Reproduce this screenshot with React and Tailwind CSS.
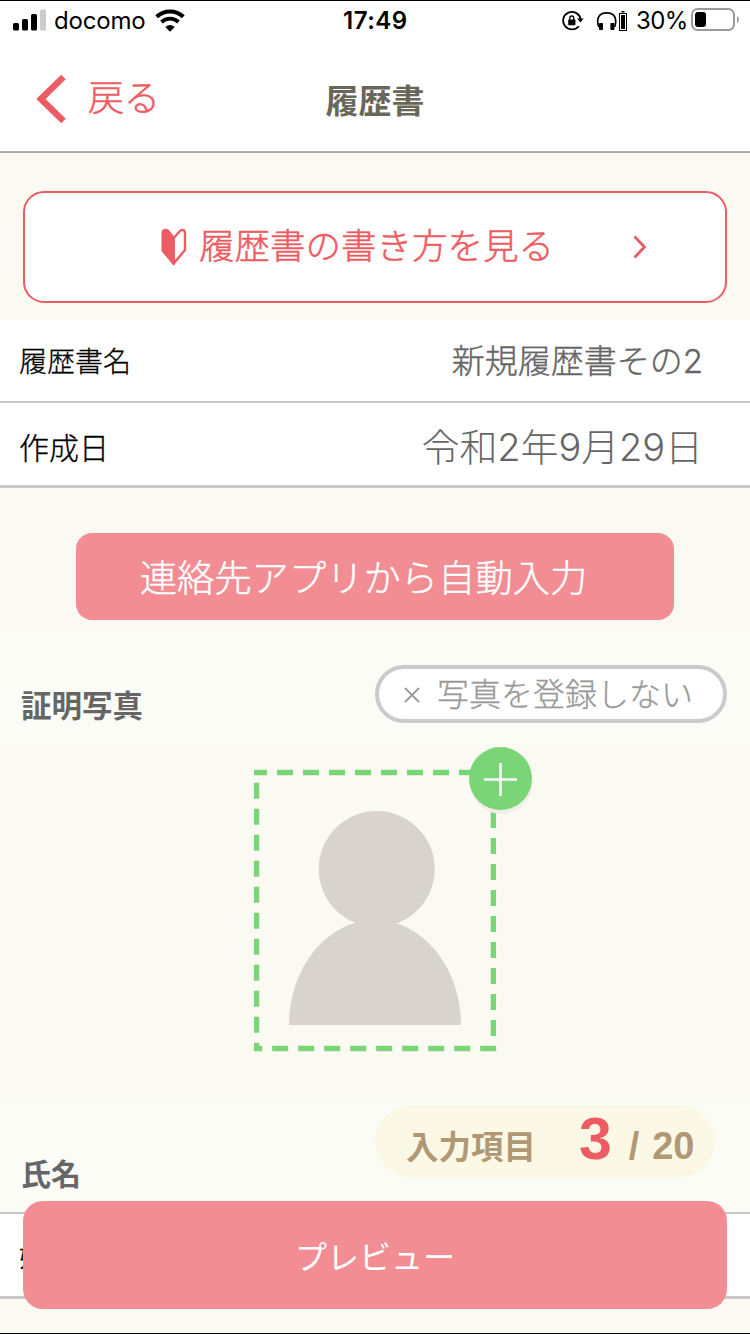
import React from "react";

const SignalIcon = () => (
	<svg className="ml-[13px] mt-2 w-[33px] h-[22px] shrink-0" viewBox="0 0 33 22">
		<rect x="0" y="14" width="6" height="7.5" rx="1.5" />
		<rect x="9" y="10" width="6" height="11.5" rx="1.5" />
		<rect x="18" y="5" width="6" height="16.5" rx="1.5" />
		<rect x="27" y="0.5" width="6" height="21" rx="1.5" fill="#cccccc" />
	</svg>
);

const WifiIcon = () => (
	<svg className="ml-[9px] mt-2 w-[30px] h-[23px] shrink-0" viewBox="0 0 30 23" fill="none" stroke="#000">
		<path d="M1.7 7.8A19.3 19.3 0 0 1 28.3 7.8" strokeWidth="4" />
		<path d="M6.5 13A12.4 12.4 0 0 1 23.5 13" strokeWidth="3.8" />
		<path d="M10.3 18Q15 14.2 19.7 18L15 22.8Z" fill="#000" stroke="none" />
	</svg>
);

const RotationLockIcon = () => (
	<svg className="mt-[9px] w-[22px] h-[22px] shrink-0" viewBox="0 0 22 22" fill="none" stroke="#000">
		<path d="M18.6 9A8.8 8.8 0 1 0 16.8 16.2" strokeWidth="1.8" />
		<path d="M15.2 8.6H21.6L18.4 12.6Z" fill="#000" stroke="none" />
		<rect x="6.2" y="9.4" width="7.2" height="5.8" rx="0.8" fill="#000" stroke="none" />
		<path d="M7.8 10V8a2 2 0 0 1 4 0V10" strokeWidth="1.3" />
	</svg>
);

const HeadphoneIcon = () => (
	<svg className="ml-3 mt-[9px] w-[32px] h-[22px] shrink-0" viewBox="0 0 32 22" fill="none" stroke="#000">
		<path d="M2.8 17C-.4 8 3.5 2.8 10.7 2.8S21.8 8 18.6 17" strokeWidth="1.7" />
		<rect x="3" y="13" width="4" height="7" rx="0.8" fill="#000" stroke="none" />
		<rect x="14.4" y="13" width="4" height="7" rx="0.8" fill="#000" stroke="none" />
		<rect x="23.5" y="3.5" width="7" height="17" strokeWidth="1" />
		<rect x="25" y="5" width="4" height="14" fill="#000" stroke="none" />
		<rect x="25.5" y="1" width="3" height="1.5" fill="#000" stroke="none" />
	</svg>
);

const BatteryIcon = () => (
	<svg className="ml-[5px] mt-[6px] w-[48px] h-[24px] shrink-0" viewBox="0 0 48 24">
		<rect x="1" y="2" width="42" height="21" rx="5.5" fill="none" stroke="#9b9b9b" strokeWidth="2" />
		<rect x="4" y="5" width="11" height="15" rx="3" />
		<path d="M46 9v7q2-1 2-3.5T46 9" fill="#9b9b9b" />
	</svg>
);

const BeginnerIcon = () => (
	<svg className="mb-px w-[26px] h-[38px] shrink-0" viewBox="0 0 26 38">
		<path
			d="M12.7 10L19.5 2.5Q24 .5 24 5.5V22L12.7 35.5Z"
			fill="none"
			stroke="#ed5c62"
			strokeWidth="2.4"
			strokeLinejoin="round"
		/>
		<path d="M13.5 9L7.5 1.6Q5 0 2.5 1.2Q.5 2 .5 5V23L12.5 37.5L13.5 37Z" fill="#ed5c62" />
	</svg>
);

const PhotoFrame = () => (
	<svg className="w-[320px] h-[351px]" viewBox="215 747 320 351">
		<g stroke="#7ad577" strokeWidth="5.3" strokeDasharray="16 10">
			<path d="M254 772.5H480" strokeDashoffset="3" />
			<path d="M256.6 782.7V1051" />
			<path d="M493.4 812V1037" />
			<path d="M254 1048.5H496.3" strokeDashoffset="7.8" />
		</g>
		<circle cx="376.7" cy="869" r="58" fill="#d9d3cd" />
		<path d="M289 1025A86 105 0 0 1 461 1025Z" fill="#d9d3cd" />
		<circle cx="501.5" cy="783" r="31" fill="#efeee7" />
		<circle cx="500.5" cy="778.5" r="31.5" fill="#7ad577" />
		<path d="M484 779.5H517M500.5 763V796" stroke="#fff" strokeWidth="2.5" />
	</svg>
);

const App = () => {
	return (
		<div className="relative flex flex-col w-[750px] h-[1334px] overflow-hidden border-y border-black bg-[#fbfaf2] font-['Inter','Noto_Sans_CJK_JP',sans-serif]">
			<header className="h-[152px] shrink-0 border-b-2 border-[#adada8] bg-white">
				<div className="flex h-10 text-2xl leading-[40px] text-black">
					<div className="flex w-[343px]">
						<SignalIcon />
						<span className="ml-[8px] w-[92px] tracking-[-0.2px]">docomo</span>
						<WifiIcon />
					</div>
					<span className="w-[219px] font-semibold tracking-[0.5px]">17:49</span>
					<RotationLockIcon />
					<HeadphoneIcon />
					<span className="ml-[8px] w-[50px] tracking-[-0.6px]">30%</span>
					<BatteryIcon />
				</div>
				<div className="grid grid-cols-3 items-center h-[116px]">
					<div className="flex items-center text-[#ed5c62]">
						<svg className="ml-[37px] w-[30px] h-[50px]" viewBox="0 0 30 50">
							<path d="M26.5 3L4 25L26.5 47" fill="none" stroke="#ed5c62" strokeWidth="6.5" />
						</svg>
						<span className="ml-[21px] mb-0.5 text-[36px] leading-[50px] font-light [-webkit-text-stroke:0.5px]">戻る</span>
					</div>
					<h1 className="pt-[3px] text-center text-[33px] leading-[50px] font-bold text-[#69675a]">履歴書</h1>
				</div>
			</header>

			<div className="h-[167px] shrink-0 px-[23px] pt-[38px]">
				<button className="flex items-center w-full h-[112px] pl-[136px] rounded-[21px] border-2 border-[#ed5c62] bg-white text-[#ed5c62]">
					<BeginnerIcon />
					<span className="ml-3 text-[35.5px] leading-[50px] font-light [-webkit-text-stroke:0.5px]">履歴書の書き方を見る</span>
					<svg className="ml-[79px] mb-px w-[14px] h-[24px]" viewBox="0 0 14 24">
						<path d="M1.5 1.5L11.5 12L1.5 22.5" fill="none" stroke="#ed5c62" strokeWidth="2.8" />
					</svg>
				</button>
			</div>

			<div className="flex items-center justify-between h-[83px] shrink-0 pl-[19px] pr-[47px] border-b-2 border-[#c8c8c8] bg-white">
				<span className="mt-[3px] text-[28px] leading-[40px] font-light text-black [-webkit-text-stroke:0.3px]">履歴書名</span>
				<span className="text-[33px] leading-[40px] font-light text-[#666] [-webkit-text-stroke:0.4px]">新規履歴書その2</span>
			</div>
			<div className="flex items-center justify-between h-[85px] shrink-0 pt-[6px] pl-[19px] pr-[47px] border-b-3 border-[#c8c8c8] bg-white">
				<span className="mt-0.5 text-[30px] leading-[40px] font-light text-black [-webkit-text-stroke:0.3px]">作成日</span>
				<span className="text-[38px] leading-[40px] font-light tracking-[-0.1px] text-[#666]">令和2年9月29日</span>
			</div>

			<div className="flex justify-center h-[140px] shrink-0 pt-[45px]">
				<button className="w-[598px] h-[87px] pt-1 pr-[23px] rounded-[16px] bg-[#f18d93] text-[37.3px] font-light text-white [-webkit-text-stroke:0.4px]">
					連絡先アプリから自動入力
				</button>
			</div>

			<div className="flex justify-between h-[119px] shrink-0 pl-[21px] pr-[23px] pt-[37px] bg-[#fbfcf6]">
				<h2 className="mt-[21px] text-[30.5px] leading-[40px] font-bold text-[#666]">証明写真</h2>
				<button className="flex items-center w-[352px] h-[58px] rounded-full border-4 border-[#cbcbcb] bg-white text-[#999]">
					<svg className="ml-[25px] mt-0.5 w-[16px] h-[16px]" viewBox="0 0 16 16">
						<path d="M1 1L15 15M15 1L1 15" stroke="#999" strokeWidth="1.8" />
					</svg>
					<span className="ml-[17px] mt-px text-[32px] leading-[40px] font-light [-webkit-text-stroke:0.3px]">写真を登録しない</span>
				</button>
			</div>

			<div className="flex justify-center h-[351px] shrink-0">
				<PhotoFrame />
			</div>

			<div className="h-[116px] shrink-0 pl-[21px] pt-[56px] border-b-2 border-[#c8c8c8] bg-[#fbfcf6]">
				<h2 className="text-[30px] leading-[40px] font-bold text-[#666]">氏名</h2>
			</div>
			<div className="flex items-center h-[85px] shrink-0 pl-[19px] border-b-3 border-[#c8c8c8] bg-white">
				<span className="mt-1 text-[28px] leading-[40px] font-light text-black [-webkit-text-stroke:0.3px]">姓</span>
			</div>

			{/* floating counter and preview button */}
			<div className="absolute inset-x-[23px] bottom-6 flex flex-col items-end gap-[23px]">
				<div className="flex items-baseline w-[340px] h-[73px] mr-3 pl-[31px] rounded-full bg-[#fbf9e5] font-bold text-[#b09875] leading-[68px]">
					<span className="text-[32.5px]">入力項目</span>
					<span className="ml-[43px] font-['Liberation_Sans',sans-serif] text-[59px] text-[#ed5c62]">3</span>
					<span className="ml-[17px] font-['Liberation_Sans',sans-serif] text-[38px] tracking-[-0.3px] [word-spacing:3px]">/ 20</span>
				</div>
				<button className="w-full h-[108px] pt-1.5 rounded-[20px] bg-[#f18d93] text-[32px] text-white">プレビュー</button>
			</div>
		</div>
	);
};

export default App;
